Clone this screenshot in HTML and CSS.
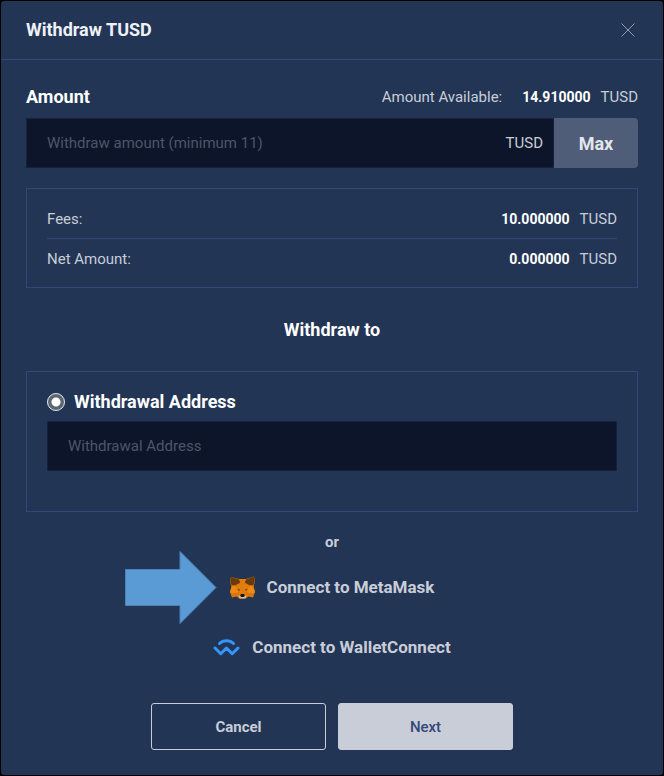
FILE: index.html
```html
<!DOCTYPE html>
<html lang="en">
<head>
    <meta charset="UTF-8">
    <meta name="viewport" content="width=device-width, initial-scale=1.0">
    <title>Withdraw TUSD</title>
    <link rel="stylesheet" href="styles.css">
</head>
<body>
    <div class="modal">
        <div class="modal-header">
            <h1>Withdraw TUSD</h1>
            <button type="button" class="close-btn" aria-label="Close">
                <svg width="14" height="14" viewBox="0 0 14 14" fill="none" stroke="currentColor">
                    <path d="M0.5 0.5L13.5 13.5M13.5 0.5L0.5 13.5"/>
                </svg>
            </button>
        </div>
        <form class="modal-body">
            <div class="amount-header">
                <label for="amount">Amount</label>
                <div class="available">
                    <span class="available-label">Amount Available:</span>
                    <span class="value"><strong>14.910000</strong> TUSD</span>
                </div>
            </div>
            <div class="amount-group">
                <div class="amount-field">
                    <input type="text" id="amount" name="amount" placeholder="Withdraw amount (minimum 11)">
                    <span class="currency">TUSD</span>
                </div>
                <button type="button" class="max-btn">Max</button>
            </div>

            <div class="box fees">
                <div class="fee-row">
                    <span>Fees:</span>
                    <span class="value"><strong>10.000000</strong> TUSD</span>
                </div>
                <div class="fee-row">
                    <span>Net Amount:</span>
                    <span class="value"><strong>0.000000</strong> TUSD</span>
                </div>
            </div>

            <h2>Withdraw to</h2>

            <div class="box address-box">
                <div class="radio-row">
                    <input type="radio" id="useAddress" name="target" checked>
                    <label for="useAddress">Withdrawal Address</label>
                </div>
                <input type="text" class="address-input" name="address" aria-label="Withdrawal Address" placeholder="Withdrawal Address">
            </div>

            <p class="or">or</p>

            <div class="wallets">
                <button type="button" class="wallet-btn">
                    <svg class="arrow" width="92" height="73" viewBox="0 0 92 73">
                        <path d="M0.5 18.5H55V0.5L91 36.5L55 72.5V54.5H0.5Z" fill="#5b9bd5" stroke="#4a83bb"/>
                    </svg>
                    <svg width="25" height="23" viewBox="0 0 25 23">
                        <path d="M1 1L9 3H16L24 0.5L25 5L23.5 11L25 16L23 21.5L18.5 20.5L15.5 22.5H9.5L6.5 20.5L2 21.5L0 16L1.5 11L0 5Z" fill="#d9780f"/>
                        <path d="M1 1L9 3.5L10.5 6.5L5 9.5L1.5 9L0.3 5Z" fill="#6b3a0c"/>
                        <path d="M24 0.5L16 3.5L14.5 6.5L20 9.5L23.5 9L24.7 5Z" fill="#6b3a0c"/>
                        <path d="M9 3H16L14.5 7L19 10L17 16L14 18H11L8 16L6 10L10.5 7Z" fill="#e07d0c"/>
                        <path d="M0 16L1.5 11L5 9.5L8 15L7 17L1 17ZM25 16L23.5 11L20 9.5L17 15L18 17L24 17Z" fill="#f0890f"/>
                        <path d="M7.5 12.7L10 13.5L9.5 14.7L8 14.3ZM17.5 12.7L15 13.5L15.5 14.7L17 14.3Z" fill="#5d4a2c"/>
                        <path d="M8.5 19L9.5 22.5H15.5L16.5 19L14 20.5H11Z" fill="#d7c1a3"/>
                        <path d="M11 18H14L14.8 20L13.5 21H11.5L10.2 20Z" fill="#161616"/>
                    </svg>
                    Connect to MetaMask
                </button>
                <button type="button" class="wallet-btn">
                    <svg width="27" height="17" viewBox="0 0 27 17" fill="none" stroke="#3396ff" stroke-width="3" stroke-linecap="round" stroke-linejoin="round">
                        <path d="M6.5 4.5C10.5 0.7 16.5 0.7 20.5 4.5"/>
                        <path d="M2 9L7.8 14.7L13.5 9L19.2 14.7L25 9"/>
                    </svg>
                    Connect to WalletConnect
                </button>
            </div>

            <div class="actions">
                <button type="button" class="btn cancel-btn">Cancel</button>
                <button type="submit" class="btn next-btn">Next</button>
            </div>
        </form>
    </div>
</body>
</html>
```
FILE: styles.css
```css
* {
    box-sizing: border-box;
}
body {
    margin: 0;
    background-color: #000;
    color: #c8cdd8;
    font-family: Roboto, Arial, sans-serif;
    font-size: 15px;
    line-height: 24px;
}
h1, h2, p {
    margin: 0;
}
button, input {
    font-family: inherit;
}
button {
    cursor: pointer;
}
.modal {
    margin: 1px;
    background-color: #233555;
    border-radius: 3px;
}
.modal-header {
    display: flex;
    justify-content: space-between;
    align-items: center;
    height: 59px;
    padding: 0 28px 0 25px;
    border-bottom: 1px solid #33477a;
}
h1, h2, .amount-header label, .radio-row label {
    color: #fff;
    font-size: 18px;
    font-weight: bold;
    line-height: 24px;
}
h1 {
    color: #eef1f6;
}
.close-btn {
    display: flex;
    padding: 0;
    border: none;
    background: none;
    color: #8f9aae;
}
.modal-body {
    padding: 25px;
}
.amount-header {
    display: flex;
    justify-content: space-between;
    align-items: center;
    margin-bottom: 9px;
}
.available {
    display: flex;
    gap: 20px;
}
.value {
    display: flex;
    gap: 10px;
}
.value strong {
    color: #fff;
    font-size: 14px;
}
.amount-group {
    display: flex;
    height: 50px;
}
.amount-field {
    display: flex;
    flex: 1;
    align-items: center;
    padding-right: 10px;
    background-color: #0d152a;
    border: 1px solid #17203c;
}
.amount-field input {
    flex: 1;
    min-width: 0;
    height: 100%;
    padding: 0 20px;
    border: none;
    background: none;
    color: #fff;
    font-size: 15px;
}
input::placeholder {
    color: #4a576b;
    opacity: 1;
}
.max-btn {
    width: 84px;
    border: none;
    border-radius: 0 4px 4px 0;
    background-color: #505d78;
    color: #e3e6eb;
    font-size: 18px;
    font-weight: bold;
}
.box {
    border: 1px solid #33477a;
}
.fees {
    margin-top: 20px;
    padding: 10px 20px 9px;
}
.fee-row {
    display: flex;
    justify-content: space-between;
    align-items: center;
    height: 39px;
}
.fee-row:first-child {
    height: 40px;
    border-bottom: 1px solid #33477a;
}
h2 {
    margin: 30px 0 29px;
    text-align: center;
}
.address-box {
    padding: 18px 20px 40px;
}
.radio-row {
    display: flex;
    align-items: center;
    gap: 9px;
    margin-bottom: 7px;
}
.radio-row input {
    appearance: none;
    width: 18px;
    height: 18px;
    margin: 0;
    border: 1px solid #e8ebef;
    border-radius: 50%;
    background: #5b6770;
}
.radio-row input:checked {
    background: radial-gradient(circle, #fff 4px, #5b6770 5px);
}
.address-input {
    display: block;
    width: 100%;
    height: 50px;
    padding: 0 20px;
    border: 1px solid #17203c;
    background-color: #0d152a;
    color: #fff;
    font-size: 15px;
}
.or {
    margin: 18px 0 17px;
    font-weight: bold;
    text-align: center;
}
.wallets {
    display: flex;
    flex-direction: column;
    align-items: center;
    gap: 28px;
}
.wallet-btn {
    position: relative;
    display: flex;
    align-items: center;
    gap: 12px;
    height: 32px;
    padding: 0;
    border: none;
    background: none;
    color: #c8cdd8;
    font-size: 17px;
    font-weight: bold;
}
/* pointer next to the recommended wallet */
.arrow {
    position: absolute;
    top: -20px;
    right: calc(100% + 13px);
}
.actions {
    display: flex;
    justify-content: center;
    gap: 12px;
    margin-top: 40px;
}
.btn {
    width: 175px;
    height: 47px;
    border: 1px solid #c8cdd8;
    border-radius: 3px;
    font-size: 15px;
    font-weight: bold;
}
.cancel-btn {
    background: none;
    color: #c8cdd8;
}
.next-btn {
    background-color: #c8cdd8;
    color: #33477a;
    font-weight: 500;
}
```
